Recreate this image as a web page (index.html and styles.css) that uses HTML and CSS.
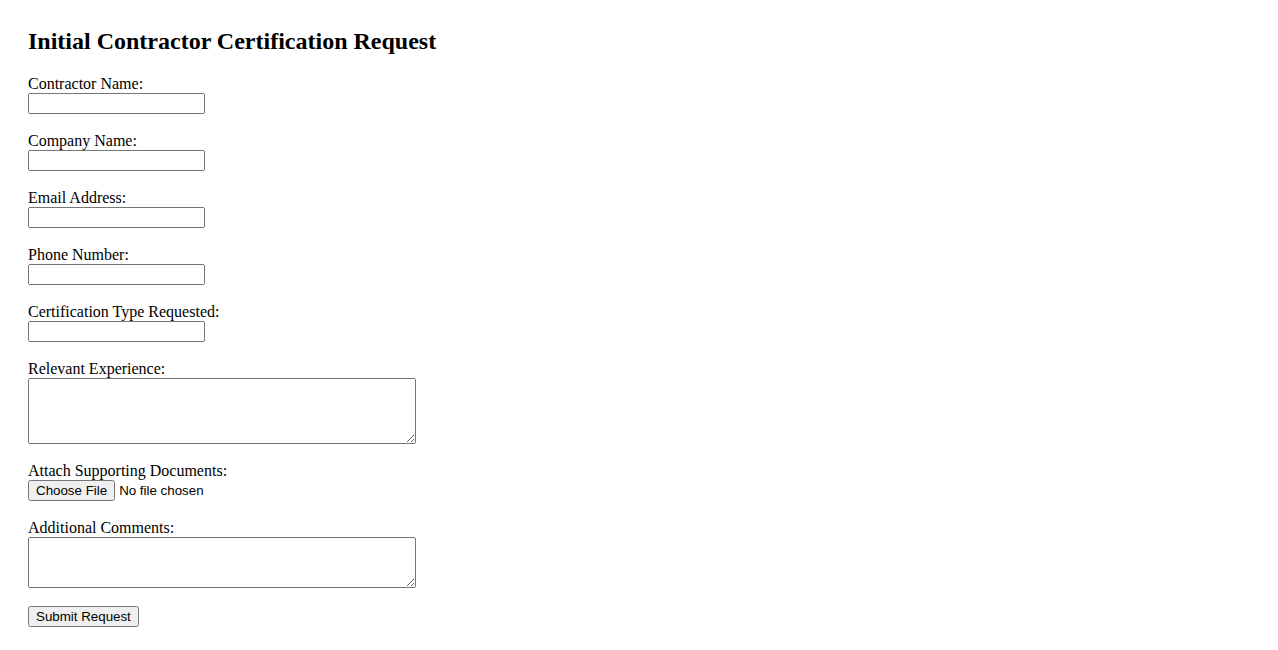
FILE: index.html
```html
<!DOCTYPE html>
<html lang="en">
<head>
<meta charset="utf-8">
<title>Initial Contractor Certification Request</title>
<link rel="stylesheet" href="styles.css">
</head>
<body>
<div class="page">
  <h2 class="title">Initial Contractor Certification Request</h2>
  <form class="form">
    <div class="group">
      <label class="label" for="cname">Contractor Name:</label>
      <div class="row"><input class="text" type="text" id="cname"></div>
    </div>
    <div class="group">
      <label class="label" for="company">Company Name:</label>
      <div class="row"><input class="text" type="text" id="company"></div>
    </div>
    <div class="group">
      <label class="label" for="email">Email Address:</label>
      <div class="row"><input class="text" type="email" id="email"></div>
    </div>
    <div class="group">
      <label class="label" for="phone">Phone Number:</label>
      <div class="row"><input class="text" type="tel" id="phone"></div>
    </div>
    <div class="group">
      <label class="label" for="ctype">Certification Type Requested:</label>
      <div class="row"><input class="text" type="text" id="ctype"></div>
    </div>
    <div class="group">
      <label class="label" for="exp">Relevant Experience:</label>
      <div class="row"><textarea class="area area-lg" id="exp"></textarea></div>
    </div>
    <div class="group">
      <label class="label" for="docs">Attach Supporting Documents:</label>
      <div class="row"><input class="file" type="file" id="docs"></div>
    </div>
    <div class="group">
      <label class="label" for="comments">Additional Comments:</label>
      <div class="row"><textarea class="area area-sm" id="comments"></textarea></div>
    </div>
    <div class="group">
      <div class="row"><button class="btn" type="submit">Submit Request</button></div>
    </div>
  </form>
</div>
</body>
</html>
```

FILE: styles.css
```css
body {
  margin: 8px;
  font-family: "Liberation Serif", "Times New Roman", serif;
  font-size: 16px;
  color: #000;
  background: #fff;
}
.page {
  padding: 20px;
}
.title {
  margin: 0 0 20px;
  font-size: 24px;
  font-weight: bold;
}
.form {
  margin: 0;
}
.group {
  margin-bottom: 18px;
}
.label {
  display: block;
}
.row {
  line-height: normal;
}
.text {
  font-family: "Liberation Sans", Arial, sans-serif;
  font-size: 13.333px;
  width: 177px;
  height: 21px;
  box-sizing: border-box;
}
.area {
  display: block;
  font-family: "Liberation Mono", monospace;
  font-size: 13.333px;
  width: 388px;
  box-sizing: border-box;
}
.area-lg { height: 66px; }
.area-sm { height: 51px; }
.file, .btn {
  font-family: "Liberation Sans", Arial, sans-serif;
  font-size: 13.333px;
}
```
